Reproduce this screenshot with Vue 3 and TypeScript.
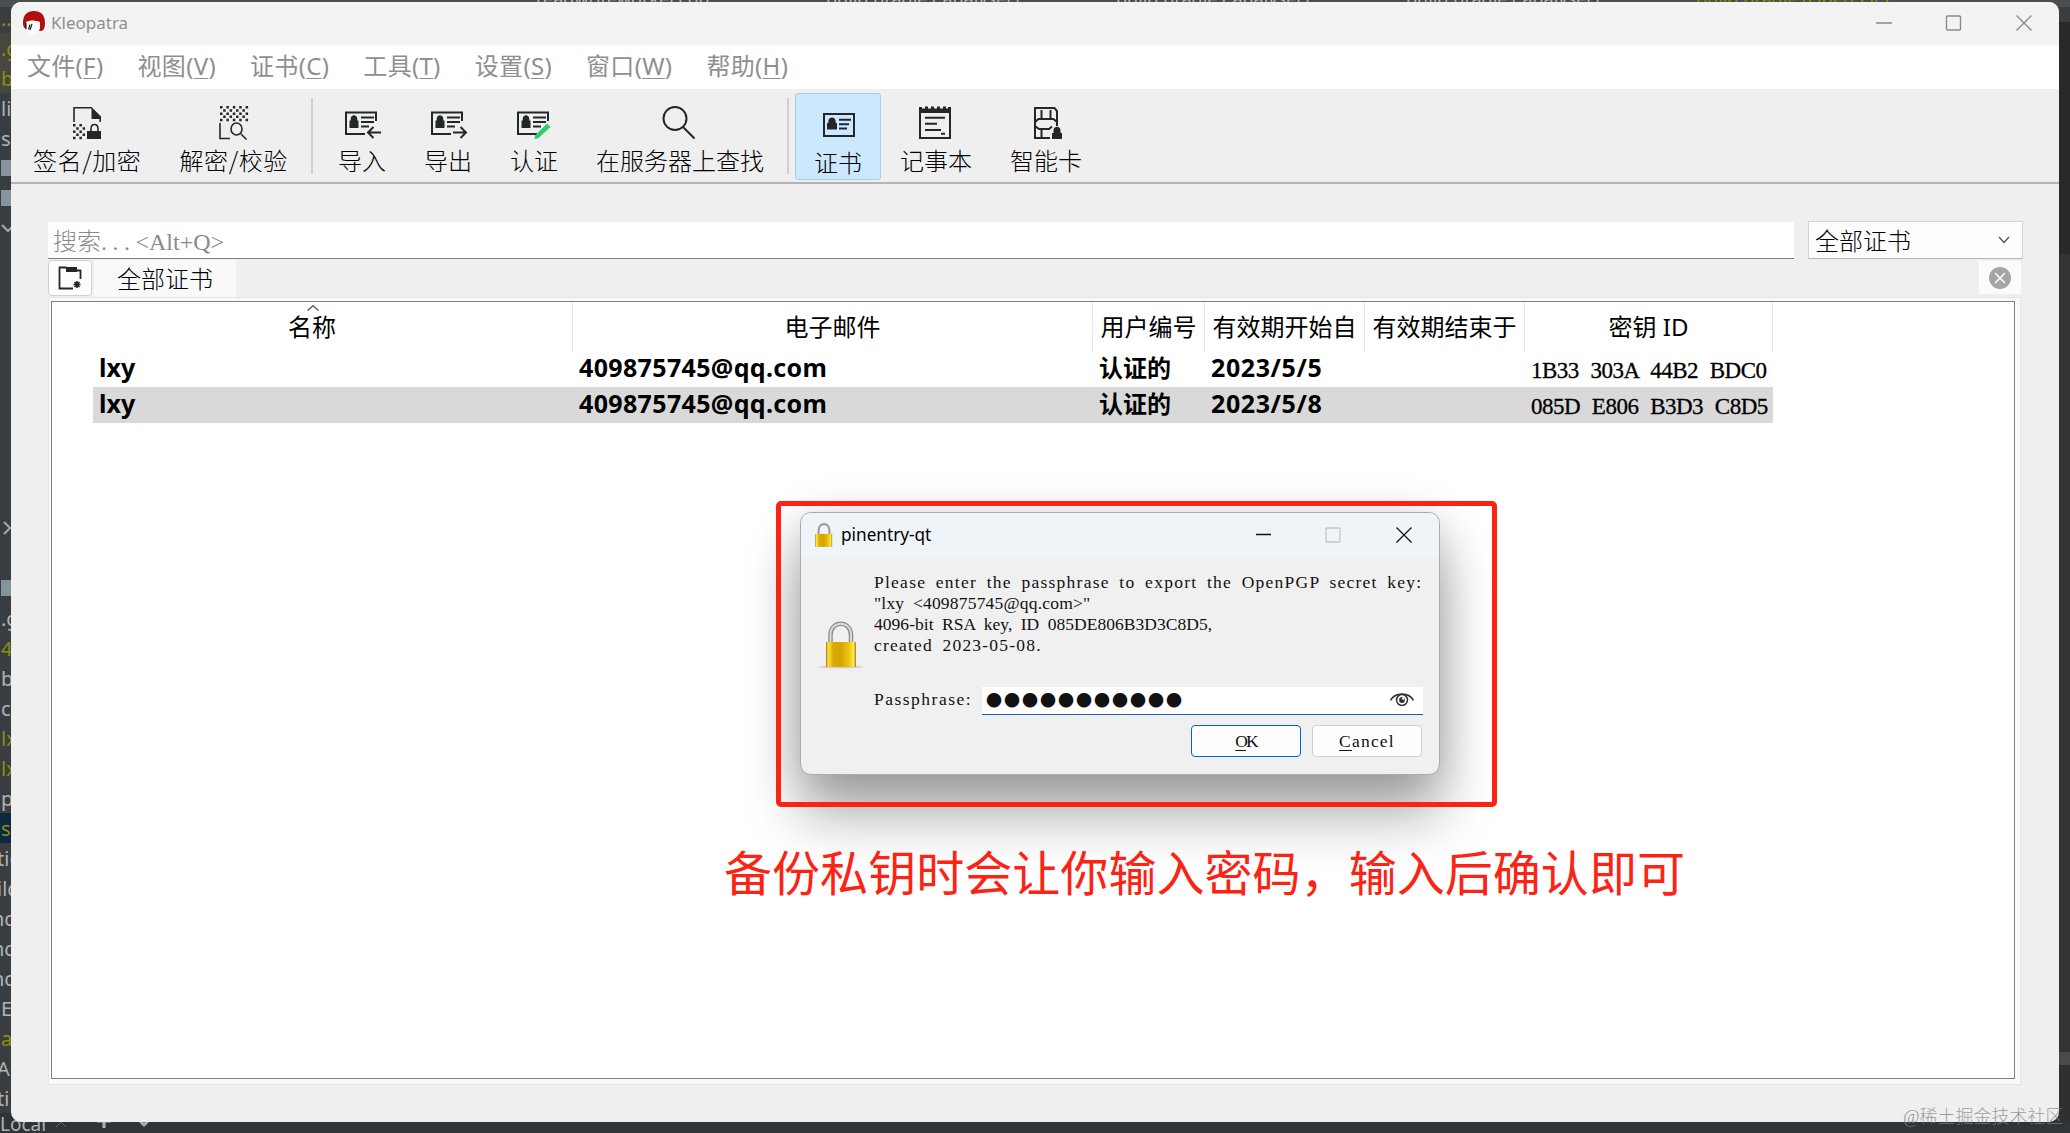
<template>
  <div class="desktop">
    <div class="editor-tabs">
      <span v-for="(tab, i) in editorTabs" :key="i" class="editor-tab" :class="{ olive: tab.olive }">{{ tab.name }}</span>
    </div>
    <div class="project-tree">
      <div v-for="(row, i) in treeRows" :key="i" class="tree-row" :class="row.kind">
        <svg v-if="row.icon === 'down'" width="11" height="10" viewBox="0 0 11 10"><path d="M1 2l6 6 6-6" /></svg>
        <svg v-else-if="row.icon === 'right'" width="11" height="14" viewBox="0 0 11 14"><path d="M3 1l6 6-6 6" /></svg>
        <i v-else-if="row.icon === 'folder'" class="folder"></i>
        <span v-else>{{ row.text }}</span>
      </div>
    </div>
    <div class="terminal-bar">
      <span>Local</span>
      <svg width="110" height="20" viewBox="0 0 110 20">
        <path class="dim" d="M10 4l10 10M20 4l-10 10" />
        <path d="M51 8h14M58 1v14" stroke-width="3" />
        <path d="M91 5l7 7 7-7" stroke-width="3" />
      </svg>
    </div>
    <div class="editor-edge"></div>

    <div class="window">
      <div class="titlebar">
        <svg class="app-icon" width="22" height="23" viewBox="0 0 22 23">
          <path d="M0 12C0 4 4 0 11 0s11 4 11 12c0 4-1 8-4 8L6 19c-4 0-6-3-6-7z" fill="#b00d0d" />
          <path d="M3 11c4-2 8-2 14 0v6c-1 4-4 6-7 6s-7-2-7-6z" fill="#fff" />
          <path d="M3 12v6M5.500 18.500l1.500-5M9 13l-2 6" stroke="#222" stroke-width="1.200" fill="none" />
        </svg>
        <span class="app-title">Kleopatra</span>
        <svg class="window-buttons" width="156" height="16" viewBox="0 0 156 16">
          <path d="M0 8h16M140.500 .5l15 15M155.500 .5l-15 15" />
          <rect x="70.500" y="1" width="14" height="14" rx="1" />
        </svg>
      </div>

      <div class="menubar">
        <span v-for="menu in menus" :key="menu.key" class="menu">{{ menu.label }}(<u>{{ menu.key }}</u>)</span>
      </div>

      <div class="toolbar">
        <template v-for="tool in tools" :key="tool.label">
          <div class="tool" :class="{ active: tool.active, slashed: tool.label.includes('/') }">
            <svg width="40" height="40" viewBox="0 0 40 40">
              <path v-if="tool.stroke" :d="tool.stroke" fill="none" stroke="#232629" stroke-width="2" />
              <path v-if="tool.thin" :d="tool.thin" fill="none" stroke="#232629" stroke-width="1.6" />
              <path v-if="tool.fill" :d="tool.fill" fill="#232629" />
              <path v-if="tool.pen" :d="tool.pen" fill="#2ecc71" />
            </svg>
            <span>{{ tool.label }}</span>
          </div>
          <div v-if="tool.separator" class="separator"></div>
        </template>
      </div>

      <div class="content">
        <div class="search-row">
          <div class="search">搜索<span class="latin"><span class="dots">...</span>&lt;Alt+Q&gt;</span></div>
          <div class="combo">
            <span>全部证书</span>
            <svg width="12" height="8" viewBox="0 0 12 8"><path d="M1 1l5 5.500L11 1" /></svg>
          </div>
        </div>
        <div class="tab-row">
          <div class="new-tab">
            <svg width="24" height="24" viewBox="0 0 24 24">
              <path d="M15 22.500H1.500v-21h7M18 4.500h4.500V13" fill="none" stroke="#232629" stroke-width="1.8" />
              <path d="M8 1h11v5H8z" fill="#232629" />
              <path d="M19 15v7M15.500 18.500h7M16.500 16l5 5M21.500 16l-5 5" stroke="#232629" stroke-width="1.6" />
            </svg>
          </div>
          <div class="tab">全部证书</div>
          <div class="close-tab">
            <svg width="22" height="22" viewBox="0 0 22 22">
              <circle cx="11" cy="11" r="11" fill="#a5a5a5" />
              <path d="M6 6l10 10M16 6L6 16" stroke="#fff" stroke-width="1.5" />
            </svg>
          </div>
        </div>
        <div class="pane">
          <div class="table">
            <div class="header">
              <div v-for="(column, i) in columns" :key="column" class="th">
                <svg v-if="i === 0" class="sort" width="12" height="6" viewBox="0 0 12 6"><path d="M.5 5.500L6 .7l5.500 4.800" /></svg>
                {{ column }}
              </div>
            </div>
            <div v-for="cert in certificates" :key="cert.keyId" class="row" :class="{ selected: cert.selected }">
              <div class="td">{{ cert.name }}</div>
              <div class="td mail">{{ cert.email }}</div>
              <div class="td status">{{ cert.status }}</div>
              <div class="td date">{{ cert.from }}</div>
              <div class="td"></div>
              <div class="td key-id">{{ cert.keyId }}</div>
            </div>
          </div>
        </div>
      </div>
    </div>

    <div class="dialog">
      <div class="dialog-title">
        <svg width="18" height="25" viewBox="0 0 32 46">
          <path d="M6 23V14c0-16 20-16 20 0v9" fill="none" stroke="#9a9a9a" stroke-width="4" />
          <rect x="0" y="20" width="31" height="24" fill="url(#brass)" />
        </svg>
        <span>pinentry-qt</span>
        <svg class="dialog-buttons" width="156" height="16" viewBox="0 0 156 16">
          <path d="M0 7.500h15M140.500 .5l15 15M155.500 .5l-15 15" stroke="#111" />
          <rect x="70" y="1" width="14" height="14" rx="1" stroke="#c3c6c9" />
        </svg>
      </div>
      <div class="dialog-body">
        <svg class="lock" width="46" height="50" viewBox="0 0 46 50">
          <defs>
            <linearGradient id="brass" x1="0" x2="1" y1="0" y2="0">
              <stop offset="0" stop-color="#a87c08" />
              <stop offset=".07" stop-color="#ffe23a" />
              <stop offset=".25" stop-color="#d9ab05" />
              <stop offset=".5" stop-color="#d6a400" />
              <stop offset=".8" stop-color="#f3cb10" />
              <stop offset=".92" stop-color="#ffe95c" />
              <stop offset="1" stop-color="#a87c08" />
            </linearGradient>
          </defs>
          <ellipse cx="23" cy="46" rx="22" ry="1.500" fill="#cfcfcf" />
          <path d="M12.500 23V14c0-15 20.500-15 20.500 0v9" fill="none" stroke="#8c8c8c" stroke-width="4.500" />
          <path d="M12.500 23V14c0-15 20.500-15 20.500 0v9" fill="none" stroke="#d8d8d8" stroke-width="2" />
          <rect x="8" y="21" width="30" height="25" fill="url(#brass)" />
        </svg>
        <div class="form">
          <div class="message">
            <div v-for="(line, i) in message" :key="i" :class="'line-' + i">{{ line }}</div>
          </div>
          <div class="pass-row">
            <label>Passphrase:</label>
            <div class="pass-input">
              <span>{{ passphrase }}</span>
              <svg width="24" height="15" viewBox="0 0 24 15">
                <path d="M.5 8.500C5 0 19 0 23.500 8.500" fill="none" stroke="#333" stroke-width="1.600" />
                <circle cx="12" cy="8" r="5.500" fill="none" stroke="#333" stroke-width="1.500" />
                <circle cx="12" cy="8" r="2.900" fill="#333" />
                <circle cx="13.200" cy="6.500" r="1.300" fill="#fff" />
              </svg>
            </div>
          </div>
          <div class="actions">
            <div class="button primary"><span><u>O</u>K</span></div>
            <div class="button"><span><u>C</u>ancel</span></div>
          </div>
        </div>
      </div>
    </div>

    <div class="highlight"></div>
    <div class="note">备份私钥时会让你输入密码，输入后确认即可</div>
    <div class="watermark">@稀土掘金技术社区</div>
  </div>
</template>

<script setup lang="ts">
import { ref } from 'vue';

interface Tool {
  label: string;
  stroke?: string;
  thin?: string;
  fill?: string;
  pen?: string;
  separator?: boolean;
  active?: boolean;
}

interface TreeRow {
  text?: string;
  icon?: string;
  kind?: string;
}

interface Certificate {
  name: string;
  email: string;
  status: string;
  from: string;
  keyId: string;
  selected: boolean;
}

// checkerboard of small squares, used by the sign and decrypt icons
const checker = (x: number, y: number, cols: number, rows: number, step: number): string => {
  let d = '';
  for (let r = 0; r < rows; r++) {
    for (let c = 0; c < cols; c++) {
      if ((r + c) % 2 === 0) {
        d += `M${x + c * step} ${y + r * step}h2.500v2.500h-2.500z`;
      }
    }
  }
  return d;
};

const cardFrame = 'M23 31H4V9.500h30V18M19 14.500h13M19 19h13M19 23.500h8';
const cardLock = 'M7.500 17.500h1.200V16c0-5 6.600-5 6.600 0v1.500h1.200V25h-9z';

const menus = ref([
  { label: '文件', key: 'F' },
  { label: '视图', key: 'V' },
  { label: '证书', key: 'C' },
  { label: '工具', key: 'T' },
  { label: '设置', key: 'S' },
  { label: '窗口', key: 'W' },
  { label: '帮助', key: 'H' },
]);

const tools = ref<Tool[]>([
  {
    label: '签名/加密',
    thin: 'M7 19V4.800h18M33.200 14v5M24 29v-3c0-6 7-6 7 0v3',
    fill: 'M24.500 4L34 13.500V16h-9.500zM20 28h14v8H20z' + checker(6, 21, 4, 5, 3.2),
  },
  {
    label: '解密/校验',
    thin: 'M6 20v15.500h10M27 31l5.500 5.500M28 26a5.500 6 0 1 1-11 0a5.500 6 0 1 1 11 0',
    fill: checker(6, 3, 9, 5, 3.2),
    separator: true,
  },
  { label: '导入', stroke: cardFrame + 'M39 29.500H26M31.500 24L26 29.500l5.500 5.500', fill: cardLock },
  { label: '导出', stroke: cardFrame + 'M25 29.500h13M32.500 24l5.500 5.500-5.500 5.500', fill: cardLock },
  { label: '认证', stroke: cardFrame, fill: cardLock, pen: 'M21 32.500L33 20.500l3.500 3.500L24 35.500l-3.500.5z' },
  {
    label: '在服务器上查找',
    stroke: 'M26.500 15.500a11.500 11.500 0 1 1-23 0a11.500 11.500 0 1 1 23 0M23 24l11.500 11.500',
    separator: true,
  },
  {
    label: '证书',
    stroke: 'M6 9h30v22H6zM21 14.800h12M21 19.200h10M21 23.500h8',
    fill: 'M9 18h1.300v-1.500c0-5.500 7.400-5.500 7.400 0V18H19v6.500H9z',
    active: true,
  },
  {
    label: '记事本',
    stroke: 'M4 5v30h30V5M9 14.800h20M9 20.800h12M9 27h16M25 30.800h4',
    fill: 'M3 5.500h32v4.500H3zM3 4h3v3H3zM9 3.500h3v3H9zM15 3.500h3v3h-3zM21 3.500h3v3h-3zM27 3.500h3v3h-3zM32 4h3v3h-3z',
  },
  {
    label: '智能卡',
    stroke: 'M24 35H9V5h19.500L31 8v15M15.500 7v9h9V7M9 19l3.500-3h15l3.500 3M9 23l4 3h10l3-2.500M15.500 26v9',
    fill: 'M26 30h1.500v-2.500c0-5 7-5 7 0V30H36v6H26z',
  },
]);

const columns = ref(['名称', '电子邮件', '用户编号', '有效期开始自', '有效期结束于', '密钥 ID']);

const certificates = ref<Certificate[]>([
  { name: 'lxy', email: '409875745@qq.com', status: '认证的', from: '2023/5/5', keyId: '1B33 303A 44B2 BDC0', selected: false },
  { name: 'lxy', email: '409875745@qq.com', status: '认证的', from: '2023/5/8', keyId: '085D E806 B3D3 C8D5', selected: true },
]);

const message = [
  'Please enter the passphrase to export the OpenPGP secret key:',
  '"lxy <409875745@qq.com>"',
  '4096-bit RSA key, ID 085DE806B3D3C8D5,',
  'created 2023-05-08.',
];

const passphrase = '●'.repeat(11);

const editorTabs = [
  { name: 'readwriteworker.cpp', olive: false },
  { name: 'build.gradle (:analyser)', olive: false },
  { name: 'build.gradle (:analyser)', olive: false },
  { name: 'build.gradle (:analyser)', olive: false },
  { name: 'build.gradle (OpenSSL)', olive: true },
];

const treeRows: TreeRow[] = [
  { text: '..', kind: 'olive' },
  { text: '.g', kind: 'olive tinted' },
  { text: 'b', kind: 'olive tinted' },
  { text: 'li' },
  { text: 's' },
  { icon: 'folder' },
  { icon: 'folder' },
  { icon: 'down' },
  ...Array.from({ length: 9 }, () => ({})),
  { icon: 'right' },
  {},
  { icon: 'folder' },
  { text: '.g' },
  { text: '4', kind: 'olive' },
  { text: 'b' },
  { text: 'c' },
  { text: 'lx', kind: 'olive' },
  { text: 'lx', kind: 'olive' },
  { text: 'p' },
  { text: 'se', kind: 'olive current' },
  { text: 'tig', kind: 'cut' },
  { text: 'ild', kind: 'cut' },
  { text: 'nc', kind: 'cut deep' },
  { text: 'nc', kind: 'cut deep' },
  { text: 'nc', kind: 'cut deep' },
  { text: 'E' },
  { text: 'a', kind: 'olive' },
  { text: 'A', kind: 'cut' },
  { text: 'ti', kind: 'cut' },
];
</script>

<style>
body {
  margin: 0;
  overflow: hidden;
}
</style>

<style scoped>
.desktop {
  position: relative;
  width: 2070px;
  height: 1133px;
  overflow: hidden;
  background: #3a3d3f;
  font-family: "Noto Sans", "Noto Sans CJK SC", sans-serif;
  box-sizing: border-box;
}

.desktop * {
  box-sizing: border-box;
}

svg {
  display: block;
  flex: none;
}

.editor-tabs {
  position: absolute;
  top: -11px;
  left: 0;
  width: 2070px;
  height: 18px;
  display: flex;
  padding-left: 536px;
  background: #4b4d4e;
  color: #b4b8ba;
  font-size: 18px;
  line-height: 18px;
  white-space: nowrap;
}

.editor-tab {
  width: 290px;
}

.olive {
  color: #8a8f10;
}

.project-tree {
  padding-top: 3px;
  width: 11px;
  overflow: hidden;
}

.tree-row {
  display: flex;
  align-items: center;
  height: 30px;
  padding-left: 1px;
  color: #b0b3b5;
  font-size: 20px;
  white-space: nowrap;
}

.tree-row.olive {
  color: #8a8f10;
}

.tree-row.tinted {
  background: #47473f;
}

.tree-row.current {
  background: #0d293e;
}

.tree-row.cut {
  padding-left: 0;
  margin-left: -3px;
}

.tree-row.deep {
  margin-left: -8px;
}

.tree-row path {
  fill: none;
  stroke: #a5a8aa;
  stroke-width: 2;
}

.folder {
  width: 10px;
  height: 16px;
  background: #87939a;
}

.terminal-bar {
  position: absolute;
  left: 0;
  top: 1113px;
  width: 2070px;
  height: 20px;
  display: flex;
  background: #313437;
  color: #b0b3b5;
  font-size: 19px;
  line-height: 22px;
}

.terminal-bar path {
  fill: none;
  stroke: #b0b3b5;
}

.terminal-bar .dim {
  stroke: #62666a;
}

.editor-edge {
  position: absolute;
  right: 0;
  top: 22px;
  width: 11px;
  height: 1100px;
  background: linear-gradient(#292929 0 232px, #333 232px 1030px, #4a4a4a 1030px 1043px, #303030 1043px);
}

.window {
  position: absolute;
  left: 11px;
  top: 2px;
  width: 2048px;
  height: 1120px;
  display: flex;
  flex-direction: column;
  border-radius: 10px;
  overflow: hidden;
  background: #efefef;
}

.titlebar {
  display: flex;
  align-items: center;
  height: 43px;
  padding: 0 27px 3px 12px;
  background: #f3f3f3;
}

.app-title {
  margin-left: 6px;
  margin-top: 1px;
  color: #8f8f8f;
  font-size: 17px;
  line-height: 24px;
}

.window-buttons {
  margin-left: auto;
  margin-top: 2px;
  fill: none;
  stroke: #8a8a8a;
  stroke-width: 1.4;
}

.menubar {
  display: flex;
  align-items: center;
  gap: 34.2px;
  height: 45px;
  padding: 0 17px 3px 16px;
  background: #fff;
  border-bottom: 1px solid #f0f0f0;
  color: #8f8f8f;
  font-size: 24px;
}

.menu {
  line-height: 34px;
  letter-spacing: 0.3px;
}

u {
  text-decoration-thickness: 1px;
  text-underline-offset: 3px;
}

.toolbar {
  display: flex;
  height: 94px;
  padding: 3px 3px 2px;
  border-bottom: 2px solid #b4b4b4;
}

.tool {
  display: flex;
  flex-direction: column;
  align-items: center;
  height: 87px;
  padding: 9px 18px 0;
  border: 1px solid transparent;
  border-radius: 3px;
  color: #000;
  font-family: "Noto Sans CJK SC", sans-serif;
  font-weight: 300;
  font-size: 24px;
  white-space: nowrap;
}

.tool span {
  line-height: 34px;
}

.slashed span {
  letter-spacing: 0.6px;
}

.tool.active {
  padding-top: 11px;
  background: #cce8ff;
  border-color: #99d1ff;
}

.separator {
  width: 2px;
  height: 76px;
  margin: 5px 6px 0 4px;
  background: #d0d0d0;
}

.content {
  display: flex;
  flex-direction: column;
  flex: 1;
  padding: 37px 36px 37px 37px;
}

.search-row {
  display: flex;
  gap: 14px;
  height: 38px;
  font-family: "Noto Sans CJK SC", sans-serif;
  font-weight: 300;
  font-size: 24px;
  line-height: 36px;
}

.search {
  flex: 1;
  margin-top: 1px;
  padding-left: 5px;
  background: #fff;
  border-bottom: 1px solid #808080;
  border-radius: 2px 2px 0 0;
  color: #8a8a8a;
}

.latin {
  font-family: "Liberation Serif", serif;
}

.dots {
  letter-spacing: 5.5px;
}

.combo {
  display: flex;
  align-items: center;
  justify-content: space-between;
  width: 215px;
  padding: 0 12px 0 6px;
  background: #fdfdfd;
  border: 1px solid #d4d4d4;
  border-bottom-color: #b4b4b4;
  color: #000;
}

.combo path,
.sort path {
  fill: none;
  stroke: #555;
  stroke-width: 1.3;
}

.tab-row {
  display: flex;
  height: 38px;
  padding-top: 1px;
}

.new-tab {
  display: flex;
  align-items: center;
  justify-content: center;
  width: 44px;
  height: 36px;
  background: #fdfdfd;
  border: 1px solid #d2d2d2;
  border-radius: 4px;
}

.tab {
  width: 142px;
  height: 38px;
  margin-left: 2px;
  background: #f9f9f9;
  text-align: center;
  font-family: "Noto Sans CJK SC", sans-serif;
  font-weight: 300;
  font-size: 24px;
  line-height: 36px;
}

.close-tab {
  display: flex;
  align-items: center;
  justify-content: center;
  width: 42px;
  height: 33px;
  margin: 1px 2px 0 auto;
  background: #fbfbfb;
}

.pane {
  flex: 1;
  display: flex;
  margin-right: 2px;
  padding: 3px 5px 5px 2px;
  background: #f9f9f9;
  border: 1px solid #e5e5e5;
}

.table {
  flex: 1;
  background: #fff;
  border: 1px solid #808080;
}

.header {
  display: grid;
  grid-template-columns: 521px 520px 112px 160px 160px 248px;
  height: 49px;
}

.th {
  position: relative;
  border-right: 1px solid #e8e8e8;
  color: #000;
  font-size: 24px;
  line-height: 50px;
  text-align: center;
  white-space: nowrap;
}

.sort {
  position: absolute;
  top: 3px;
  left: 255px;
}

.row {
  display: grid;
  grid-template-columns: 480px 520px 112px 160px 160px 248px;
  width: 1680px;
  height: 36px;
  margin-left: 41px;
}

.row.selected {
  background: #d9d9d9;
}

.td {
  padding-left: 6px;
  color: #000;
  font-size: 25px;
  font-weight: 700;
  line-height: 33px;
  white-space: nowrap;
}

.mail {
  letter-spacing: 0.35px;
}

.status {
  font-size: 24px;
}

.date {
  letter-spacing: 0.6px;
}

.key-id {
  font-family: "Liberation Serif", serif;
  font-weight: 400;
  font-size: 23px;
  line-height: 40px;
  letter-spacing: -0.5px;
  word-spacing: 6.5px;
  -webkit-text-stroke: 0.3px #000;
}

.dialog {
  position: absolute;
  left: 800px;
  top: 512px;
  width: 640px;
  height: 263px;
  background: #f0f0f0;
  border: 1.5px solid #a9abad;
  border-radius: 11px;
  box-shadow: 0 40px 56px rgba(0, 0, 0, 0.33), 0 4px 44px rgba(0, 0, 0, 0.16);
}

.dialog-title {
  display: flex;
  align-items: center;
  height: 45px;
  padding: 0 27px 0 14px;
  background: #eff4f9;
  border-radius: 10px 10px 0 0;
  font-size: 17.2px;
}

.dialog-title span {
  margin-left: 8px;
  margin-bottom: 2px;
}

.dialog-buttons {
  margin-left: auto;
  margin-bottom: 2px;
  fill: none;
  stroke-width: 1.3;
}

.dialog-body {
  display: flex;
  color: #111;
  font-family: "Liberation Serif", serif;
  font-size: 17.5px;
}

.lock {
  margin: 63px 8px 0 17px;
}

.form {
  flex: 1;
  min-width: 0;
  margin-left: 2px;
  padding: 14px 16px 0 0;
}

.message {
  line-height: 21px;
  white-space: pre;
  word-spacing: 4px;
}

.line-0 {
  letter-spacing: 1.25px;
}

.line-1 {
  letter-spacing: 0.2px;
}

.line-2 {
  letter-spacing: 0.04px;
}

.line-3 {
  letter-spacing: 1.2px;
}

.pass-row {
  display: flex;
  justify-content: space-between;
  margin-top: 31px;
  line-height: 25px;
}

.pass-row label {
  letter-spacing: 1.5px;
}

.pass-input {
  display: flex;
  align-items: center;
  justify-content: space-between;
  width: 441px;
  height: 28px;
  padding: 0 9px 2px 4px;
  background: #fff;
  border-bottom: 1.5px solid #1065b0;
  font-family: "Noto Sans CJK SC", sans-serif;
  font-size: 16px;
  letter-spacing: 2px;
}

.actions {
  display: flex;
  justify-content: flex-end;
  gap: 11px;
  margin: 10px 1px 0 0;
}

.button {
  width: 110px;
  height: 32px;
  background: #fdfdfd;
  border: 1px solid #d0d0d0;
  border-radius: 4px;
  text-align: center;
  line-height: 31px;
  letter-spacing: 1.2px;
}

.button.primary {
  border-color: #0067c0;
  letter-spacing: -2px;
}

.highlight {
  position: absolute;
  left: 776px;
  top: 501px;
  width: 721px;
  height: 306px;
  border: 5px solid #fa2314;
  border-radius: 5px;
}

.note {
  position: absolute;
  left: 724px;
  top: 835px;
  color: #fa2314;
  font-family: "Noto Sans CJK SC", sans-serif;
  font-size: 48px;
  line-height: 70px;
  letter-spacing: 0.05px;
  white-space: nowrap;
}

.watermark {
  position: absolute;
  left: 1903px;
  top: 1104px;
  color: rgba(130, 130, 130, 0.75);
  font-family: "Liberation Serif", "Noto Sans CJK SC", serif;
  font-weight: 300;
  font-size: 18px;
  line-height: 26px;
  white-space: nowrap;
}
</style>
